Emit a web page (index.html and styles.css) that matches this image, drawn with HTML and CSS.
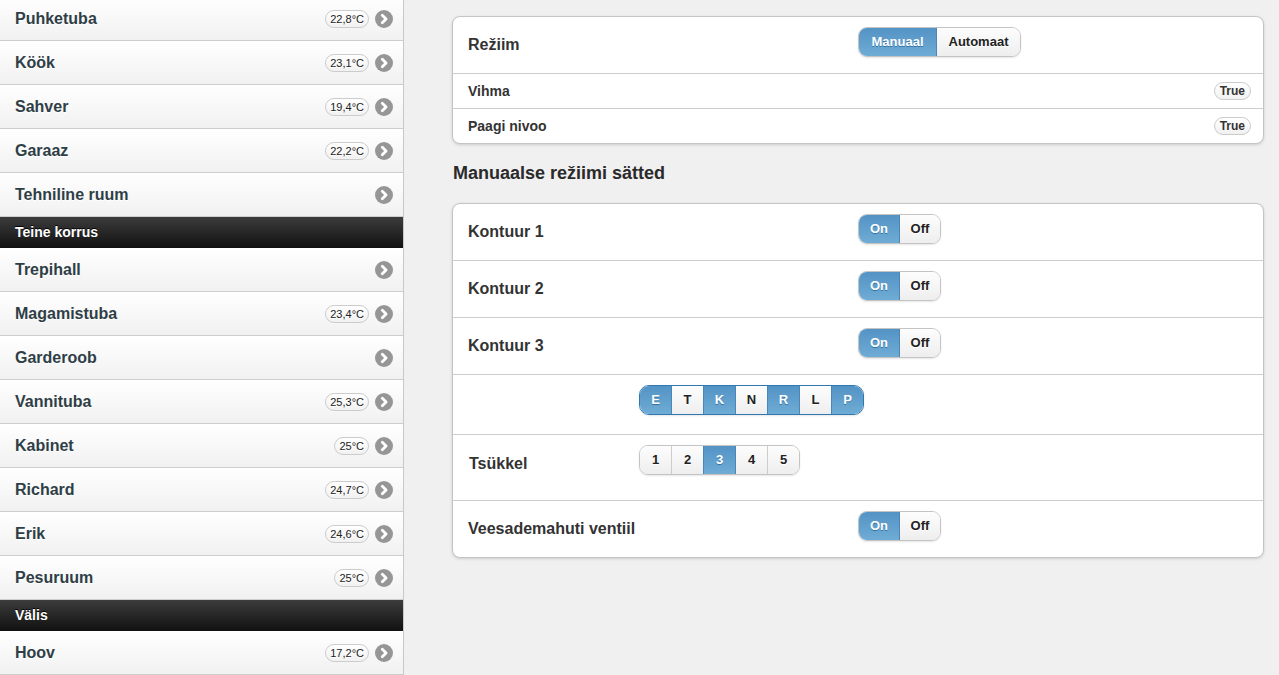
FILE: index.html
```html
<!DOCTYPE html>
<html lang="et">
<head>
    <meta charset="UTF-8">
    <meta name="viewport" content="width=device-width, initial-scale=1.0">
    <title>Maja</title>
    <link rel="stylesheet" href="styles.css">
</head>
<body>
    <div class="sidebar">
        <ul class="rooms">
            <li class="room"><span class="room-name">Puhketuba</span><span class="count">22,8°C</span><svg class="arrow" viewBox="0 0 18 18"><circle cx="9" cy="9" r="9"/><path d="M7.3 5.2l3.8 3.8-3.8 3.8"/></svg></li>
            <li class="room"><span class="room-name">Köök</span><span class="count">23,1°C</span><svg class="arrow" viewBox="0 0 18 18"><circle cx="9" cy="9" r="9"/><path d="M7.3 5.2l3.8 3.8-3.8 3.8"/></svg></li>
            <li class="room"><span class="room-name">Sahver</span><span class="count">19,4°C</span><svg class="arrow" viewBox="0 0 18 18"><circle cx="9" cy="9" r="9"/><path d="M7.3 5.2l3.8 3.8-3.8 3.8"/></svg></li>
            <li class="room"><span class="room-name">Garaaz</span><span class="count">22,2°C</span><svg class="arrow" viewBox="0 0 18 18"><circle cx="9" cy="9" r="9"/><path d="M7.3 5.2l3.8 3.8-3.8 3.8"/></svg></li>
            <li class="room"><span class="room-name">Tehniline ruum</span><svg class="arrow" viewBox="0 0 18 18"><circle cx="9" cy="9" r="9"/><path d="M7.3 5.2l3.8 3.8-3.8 3.8"/></svg></li>
            <li class="divider">Teine korrus</li>
            <li class="room"><span class="room-name">Trepihall</span><svg class="arrow" viewBox="0 0 18 18"><circle cx="9" cy="9" r="9"/><path d="M7.3 5.2l3.8 3.8-3.8 3.8"/></svg></li>
            <li class="room"><span class="room-name">Magamistuba</span><span class="count">23,4°C</span><svg class="arrow" viewBox="0 0 18 18"><circle cx="9" cy="9" r="9"/><path d="M7.3 5.2l3.8 3.8-3.8 3.8"/></svg></li>
            <li class="room"><span class="room-name">Garderoob</span><svg class="arrow" viewBox="0 0 18 18"><circle cx="9" cy="9" r="9"/><path d="M7.3 5.2l3.8 3.8-3.8 3.8"/></svg></li>
            <li class="room"><span class="room-name">Vannituba</span><span class="count">25,3°C</span><svg class="arrow" viewBox="0 0 18 18"><circle cx="9" cy="9" r="9"/><path d="M7.3 5.2l3.8 3.8-3.8 3.8"/></svg></li>
            <li class="room"><span class="room-name">Kabinet</span><span class="count">25°C</span><svg class="arrow" viewBox="0 0 18 18"><circle cx="9" cy="9" r="9"/><path d="M7.3 5.2l3.8 3.8-3.8 3.8"/></svg></li>
            <li class="room"><span class="room-name">Richard</span><span class="count">24,7°C</span><svg class="arrow" viewBox="0 0 18 18"><circle cx="9" cy="9" r="9"/><path d="M7.3 5.2l3.8 3.8-3.8 3.8"/></svg></li>
            <li class="room"><span class="room-name">Erik</span><span class="count">24,6°C</span><svg class="arrow" viewBox="0 0 18 18"><circle cx="9" cy="9" r="9"/><path d="M7.3 5.2l3.8 3.8-3.8 3.8"/></svg></li>
            <li class="room"><span class="room-name">Pesuruum</span><span class="count">25°C</span><svg class="arrow" viewBox="0 0 18 18"><circle cx="9" cy="9" r="9"/><path d="M7.3 5.2l3.8 3.8-3.8 3.8"/></svg></li>
            <li class="divider">Välis</li>
            <li class="room"><span class="room-name">Hoov</span><span class="count">17,2°C</span><svg class="arrow" viewBox="0 0 18 18"><circle cx="9" cy="9" r="9"/><path d="M7.3 5.2l3.8 3.8-3.8 3.8"/></svg></li>
        </ul>
    </div>

    <div class="main">
        <div class="card">
            <div class="row row-big">
                <span class="label">Režiim</span>
                <div class="seg">
                    <span class="btn active w-manuaal">Manuaal</span>
                    <span class="btn w-automaat">Automaat</span>
                </div>
            </div>
            <div class="row row-small">
                <span class="label label-small">Vihma</span>
                <span class="badge">True</span>
            </div>
            <div class="row row-small">
                <span class="label label-small">Paagi nivoo</span>
                <span class="badge">True</span>
            </div>
        </div>

        <h2 class="section-title">Manuaalse režiimi sätted</h2>

        <div class="card">
            <div class="row row-big">
                <span class="label">Kontuur 1</span>
                <div class="seg">
                    <span class="btn active w-onoff">On</span>
                    <span class="btn w-onoff">Off</span>
                </div>
            </div>
            <div class="row row-big">
                <span class="label">Kontuur 2</span>
                <div class="seg">
                    <span class="btn active w-onoff">On</span>
                    <span class="btn w-onoff">Off</span>
                </div>
            </div>
            <div class="row row-big">
                <span class="label">Kontuur 3</span>
                <div class="seg">
                    <span class="btn active w-onoff">On</span>
                    <span class="btn w-onoff">Off</span>
                </div>
            </div>
            <div class="row row-narrow row-days">
                <span class="label"></span>
                <div class="seg">
                    <span class="btn active w-cell">E</span>
                    <span class="btn w-cell">T</span>
                    <span class="btn active w-cell">K</span>
                    <span class="btn w-cell">N</span>
                    <span class="btn active w-cell">R</span>
                    <span class="btn w-cell">L</span>
                    <span class="btn active w-cell">P</span>
                </div>
            </div>
            <div class="row row-narrow row-cycle">
                <span class="label label-cycle">Tsükkel</span>
                <div class="seg">
                    <span class="btn w-cell">1</span>
                    <span class="btn w-cell">2</span>
                    <span class="btn active w-cell">3</span>
                    <span class="btn w-cell">4</span>
                    <span class="btn w-cell">5</span>
                </div>
            </div>
            <div class="row row-big">
                <span class="label">Veesademahuti ventiil</span>
                <div class="seg">
                    <span class="btn active w-onoff">On</span>
                    <span class="btn w-onoff">Off</span>
                </div>
            </div>
        </div>
    </div>
</body>
</html>
```

FILE: styles.css
```css
body {
    margin: 0;
    display: flex;
    height: 675px;
    overflow: hidden;
    font-family: "Liberation Sans", Arial, Helvetica, sans-serif;
    background-color: #f0f0f0;
    color: #333;
}
.sidebar {
    width: 403px;
    flex-shrink: 0;
    border-right: 1px solid #c8c8c8;
    background-color: #f4f4f4;
    overflow: hidden;
}
.rooms {
    list-style: none;
    margin: -3px 0 0 0;
    padding: 0;
}
.room {
    display: flex;
    align-items: center;
    height: 43px;
    padding: 0 10px 0 15px;
    border-bottom: 1px solid #cdcdcd;
    background: linear-gradient(#ffffff, #f1f1f1);
    font-size: 16px;
    font-weight: bold;
    color: #2f3e46;
    text-shadow: 0 1px 0 #fff;
}
.room-name {
    flex: 1;
}
.count {
    height: 16px;
    line-height: 16px;
    padding: 0 4px;
    margin-right: 6px;
    border: 1px solid #cccccc;
    border-radius: 9px;
    background: linear-gradient(#ffffff, #f1f1f1);
    font-size: 11px;
    font-weight: normal;
    color: #222;
}
.arrow {
    width: 18px;
    height: 18px;
}
.arrow circle {
    fill: #969696;
}
.arrow path {
    fill: none;
    stroke: #fff;
    stroke-width: 2.8;
    stroke-linecap: round;
    stroke-linejoin: round;
}
.divider {
    height: 31px;
    line-height: 31px;
    padding-left: 15px;
    background: linear-gradient(#3c3c3c, #111111);
    color: #fff;
    font-size: 14px;
    font-weight: bold;
    text-shadow: 0 -1px 0 #000;
}
.main {
    flex: 1;
    padding: 16px 15px 0 48px;
}
.card {
    background-color: #fff;
    border: 1px solid #c4c4c4;
    border-radius: 8px;
    box-shadow: 0 1px 3px rgba(0, 0, 0, 0.15);
}
.row {
    display: grid;
    grid-template-columns: 405px 1fr;
    align-items: center;
    border-bottom: 1px solid #cdcdcd;
}
.row:last-child {
    border-bottom: none;
}
.row-big {
    height: 56px;
}
.row-small {
    height: 34px;
    grid-template-columns: 1fr auto;
}
.row-narrow {
    grid-template-columns: 186px 1fr;
}
.row-days {
    height: 59px;
}
.row-cycle {
    height: 65px;
}
.label {
    padding-left: 15px;
    font-size: 16px;
    font-weight: bold;
    color: #333;
}
.label-small {
    font-size: 14px;
}
.label-cycle {
    padding-left: 16px;
    padding-bottom: 8px;
}
.seg {
    display: flex;
    align-self: start;
    margin-top: 10px;
    justify-self: start;
    border: 1px solid #c4c4c4;
    border-radius: 9px;
    overflow: hidden;
    box-shadow: 0 1px 2px rgba(0, 0, 0, 0.1);
}
.btn {
    height: 28px;
    line-height: 28px;
    text-align: center;
    font-size: 13px;
    font-weight: bold;
    color: #222;
    text-shadow: 0 1px 0 #fff;
    background: linear-gradient(#fdfdfd, #eeeeee);
    border-left: 1px solid #cdcdcd;
}
.btn:first-child {
    border-left: none;
}
.btn.active {
    color: #fff;
    background: linear-gradient(#5393c5, #6facd5);
    text-shadow: 0 1px 0 #3373a5;
    border-left-color: #4a86b8;
}
.seg .active + .btn {
    border-left-color: #4a86b8;
}
.w-manuaal {
    width: 77px;
}
.w-automaat {
    width: 83px;
}
.w-onoff {
    width: 40px;
}
.w-cell {
    width: 31px;
}
.row-days .seg {
    border-color: #2f78b0;
    border-radius: 10px;
}
.badge {
    margin-right: 12px;
    height: 16px;
    line-height: 16px;
    padding: 0 5px;
    border: 1px solid #cccccc;
    border-radius: 9px;
    background: linear-gradient(#ffffff, #f1f1f1);
    font-size: 12px;
    font-weight: bold;
    color: #333;
}
.section-title {
    margin: 17px 0 18px 1px;
    height: 24px;
    line-height: 24px;
    font-size: 18px;
    font-weight: bold;
    color: #2a2a2a;
}
```
